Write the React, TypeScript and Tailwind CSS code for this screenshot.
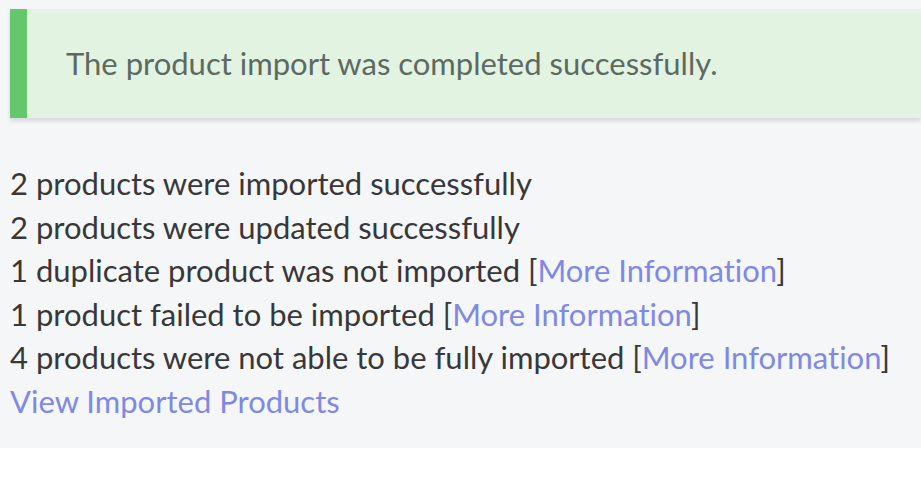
import React from "react";

const Link = ({ children }: { children: React.ReactNode }) => (
  <a className="text-[#7f89e4]">{children}</a>
);

export default function App() {
  return (
    <div className="w-[921px] h-[484px] bg-white font-['Lato',sans-serif] [font-variant-ligatures:none]">
      <div className="h-[448px] bg-[#f5f6f8] pt-[9px] pl-[10px]">
        <div className="h-[109px] flex items-center bg-[#e2f3e2] border-l-[17px] border-[#62c86b] shadow-[0_3px_4px_rgba(0,0,0,0.12)] pl-[39px]">
          <span className="text-[31px] text-[#5d6a62]">The product import was completed successfully.</span>
        </div>
        <div className="mt-[44px] text-[31px] leading-[43.6px] text-[#383838]">
          <div>2 products were imported successfully</div>
          <div>2 products were updated successfully</div>
          <div>1 duplicate product was not imported [<Link>More Information</Link>]</div>
          <div>1 product failed to be imported [<Link>More Information</Link>]</div>
          <div>4 products were not able to be fully imported [<Link>More Information</Link>]</div>
          <div><Link>View Imported Products</Link></div>
        </div>
      </div>
    </div>
  );
}
